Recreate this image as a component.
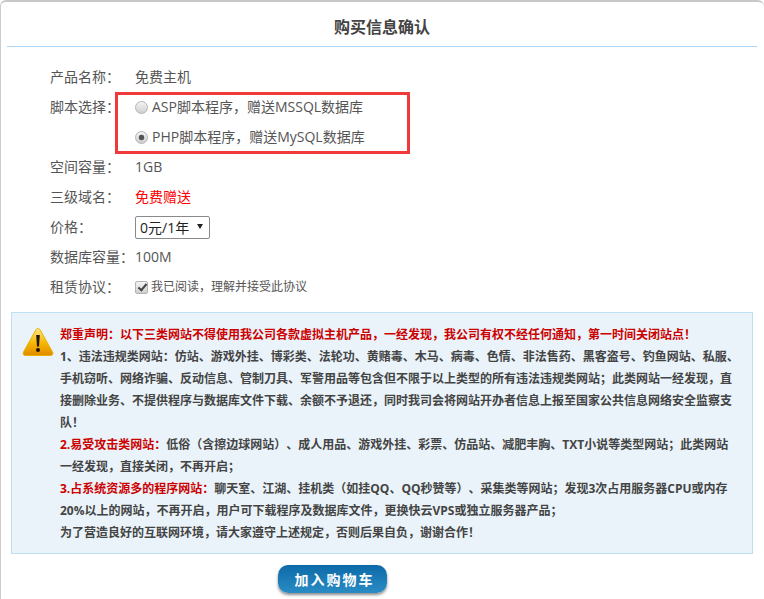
<div class="page">
  <h1 class="title">购买信息确认</h1>
  <div class="form">
    <div class="row"><span class="label">产品名称：</span><span>免费主机</span></div>
    <div class="row script">
      <span class="label">脚本选择：</span>
      <div class="options">
        <label class="opt"><input type="radio" name="s" />ASP脚本程序，赠送MSSQL数据库</label>
        <label class="opt"><input type="radio" name="s" checked />PHP脚本程序，赠送MySQL数据库</label>
      </div>
    </div>
    <div class="row"><span class="label">空间容量：</span><span>1GB</span></div>
    <div class="row"><span class="label">三级域名：</span><span class="red">免费赠送</span></div>
    <div class="row"><span class="label">价格：</span>
      <span class="sel-wrap"><select class="sel"><option>0元/1年</option></select></span>
    </div>
    <div class="row"><span class="label">数据库容量：</span><span>100M</span></div>
    <div class="row"><span class="label">租赁协议：</span>
      <label class="agree"><input type="checkbox" checked />我已阅读，理解并接受此协议</label>
    </div>
  </div>

  <div class="notice">
    <svg class="warn" width="32" height="30" viewBox="0 0 32 30">
      <defs>
        <linearGradient id="g" x1="0" y1="0" x2="0" y2="1">
          <stop offset="0" stop-color="#ffe680" />
          <stop offset="0.55" stop-color="#f7b500" />
          <stop offset="1" stop-color="#e08a00" />
        </linearGradient>
      </defs>
      <path d="M16 1.5 C17 1.5 17.6 2 18.2 3 L30.5 25 C31.5 27 30.5 28.5 28.5 28.5 L3.5 28.5 C1.5 28.5 .5 27 1.5 25 L13.8 3 C14.4 2 15 1.5 16 1.5 Z" fill="url(#g)" stroke="#eab000" stroke-width="1" />
      <path d="M14.2 8 H17.8 L17 19.5 H15 Z" fill="#1c1408" />
      <circle cx="16" cy="23" r="2" fill="#1c1408" />
    </svg>
    <p class="dark-red">郑重声明：以下三类网站不得使用我公司各款虚拟主机产品，一经发现，我公司有权不经任何通知，第一时间关闭站点！</p>
    <p>1、违法违规类网站：仿站、游戏外挂、博彩类、法轮功、黄赌毒、木马、病毒、色情、非法售药、黑客盗号、钓鱼网站、私服、手机窃听、网络诈骗、反动信息、管制刀具、军警用品等包含但不限于以上类型的所有违法违规类网站；此类网站一经发现，直接删除业务、不提供程序与数据库文件下载、余额不予退还，同时我司会将网站开办者信息上报至国家公共信息网络安全监察支队！</p>
    <p><span class="dark-red">2.易受攻击类网站：</span>低俗（含擦边球网站）、成人用品、游戏外挂、彩票、仿品站、减肥丰胸、TXT小说等类型网站；此类网站<br />一经发现，直接关闭，不再开启；</p>
    <p><span class="dark-red">3.占系统资源多的程序网站：</span>聊天室、江湖、挂机类（如挂QQ、QQ秒赞等）、采集类等网站；发现3次占用服务器CPU或内存20%以上的网站，不再开启，用户可下载程序及数据库文件，更换快云VPS或独立服务器产品；</p>
    <p>为了营造良好的互联网环境，请大家遵守上述规定，否则后果自负，谢谢合作！</p>
  </div>

  <div class="actions"><button class="buy">加入购物车</button></div>
</div>

<style>
  :global(body) {
    margin: 0;
    background: #fff;
    font-family: "Open Sans", "Noto Sans CJK SC", sans-serif;
    text-spacing-trim: space-all;
    overflow: hidden;
  }
  .page {
    box-sizing: border-box;
    width: 764px;
    height: 599px;
    padding-left: 6px;
    border-top: 2px solid #c8c8c8;
    border-left: 1px solid #ccc;
    border-top-left-radius: 6px;
    border-top-right-radius: 6px;
    overflow: hidden;
  }
  .title {
    margin: 0;
    height: 45px;
    line-height: 50px;
    box-sizing: border-box;
    font-size: 16px;
    font-weight: 700;
    text-align: center;
    color: #444;
    border-bottom: 1px solid #aed6f7;
    width: 750px;
  }
  .form {
    padding: 15px 0 0 43px;
    font-size: 14px;
    color: #555;
  }
  .row {
    display: flex;
    align-items: center;
    height: 30px;
    line-height: 30px;
  }
  .label {
    width: 85px;
    flex: none;
    white-space: nowrap;
  }
  .script {
    align-items: flex-start;
    height: 60px;
  }
  .options {
    flex: none;
    box-sizing: border-box;
    width: 295px;
    height: 62px;
    margin-left: -20px;
    border: 3px solid #f03a3a;
    padding-left: 17px;
  }
  .opt {
    display: flex;
    align-items: center;
    height: 24px;
    line-height: 24px;
    white-space: nowrap;
  }
  .opt + .opt { margin-top: 6px; }
  .opt input {
    appearance: none;
    box-sizing: border-box;
    flex: none;
    margin: 0 4px 0 0;
    width: 13px;
    height: 13px;
    border: 1px solid #b4b4b4;
    border-radius: 50%;
    background: linear-gradient(#f4f4f4, #cfcfcf);
  }
  .opt input:checked {
    background: radial-gradient(circle, #555 0 2.5px, transparent 3.2px), linear-gradient(#f4f4f4, #cfcfcf);
  }
  .red { color: #f00; }
  .sel-wrap {
    position: relative;
    display: block;
    width: 75px;
    height: 23px;
  }
  .sel-wrap::after {
    content: "";
    position: absolute;
    right: 7px;
    top: 8px;
    border-left: 3.5px solid transparent;
    border-right: 3.5px solid transparent;
    border-top: 5px solid #222;
    pointer-events: none;
  }
  .sel {
    appearance: none;
    display: block;
    box-sizing: border-box;
    width: 75px;
    height: 23px;
    font-size: 14px;
    line-height: 21px;
    font-family: inherit;
    color: #222;
    background: #fff;
    border: 1px solid #8a8a8a;
    border-radius: 2px;
    padding: 0 0 0 4px;
  }
  .agree {
    display: flex;
    align-items: center;
    font-size: 12px;
  }
  .agree input {
    appearance: none;
    position: relative;
    box-sizing: border-box;
    margin: 0 3px 0 0;
    width: 13px;
    height: 13px;
    border: 1px solid #b4b4b4;
    border-radius: 2px;
    background: linear-gradient(#f4f4f4, #cfcfcf);
  }
  .agree input::before {
    content: "";
    position: absolute;
    left: 3.5px;
    top: 0.5px;
    width: 3px;
    height: 7px;
    border-right: 2px solid #444;
    border-bottom: 2px solid #444;
    transform: rotate(40deg);
  }
  .notice {
    position: relative;
    box-sizing: border-box;
    width: 742px;
    height: 242px;
    margin: 10px 0 0 4px;
    padding: 11px 11px 0 48px;
    background: #e9f3f9;
    border: 1px solid #bde0f3;
    font-size: 12px;
    line-height: 22px;
    font-weight: 700;
    color: #444;
  }
  .notice p { margin: 0; }
  .dark-red { color: #c00; }
  .warn { position: absolute; left: 10px; top: 14px; }
  .actions {
    margin-top: 11px;
    padding-left: 271px;
  }
  .buy {
    display: block;
    width: 109px;
    height: 28px;
    border: none;
    border-radius: 10px;
    background: linear-gradient(#0d6aa8, #2a8cc4);
    box-shadow: 0 2px 3px rgba(0,0,0,.45);
    color: #fff;
    font: 700 14px "Noto Sans CJK SC", sans-serif;
    letter-spacing: 2px;
    padding: 0 0 0 4px;
  }
</style>
